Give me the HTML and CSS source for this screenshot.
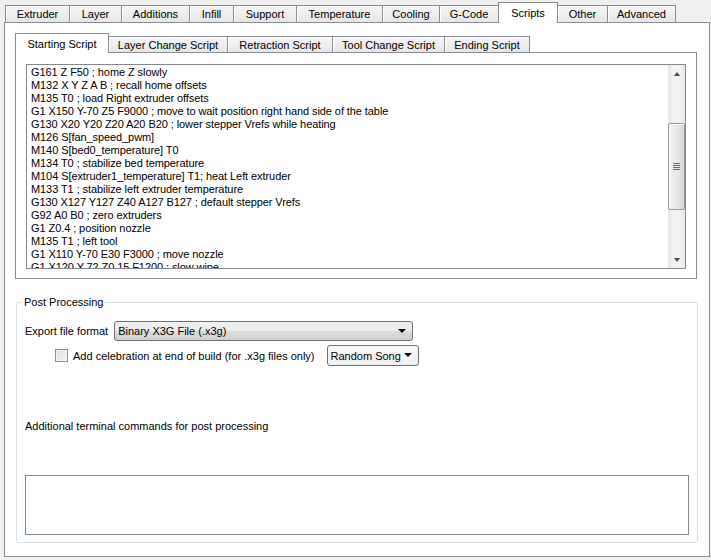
FILE: index.html
```html
<!DOCTYPE html>
<html lang="en">
<head>
    <meta charset="UTF-8">
    <title>Scripts</title>
    <link rel="stylesheet" href="styles.css">
</head>
<body>
    <div class="notebook">
        <div class="tabbar">
            <div class="tab">Extruder</div>
            <div class="tab">Layer</div>
            <div class="tab">Additions</div>
            <div class="tab">Infill</div>
            <div class="tab">Support</div>
            <div class="tab">Temperature</div>
            <div class="tab">Cooling</div>
            <div class="tab">G-Code</div>
            <div class="tab active">Scripts</div>
            <div class="tab">Other</div>
            <div class="tab">Advanced</div>
        </div>
        <div class="pane">
            <div class="notebook inner">
                <div class="tabbar">
                    <div class="tab active">Starting Script</div>
                    <div class="tab">Layer Change Script</div>
                    <div class="tab">Retraction Script</div>
                    <div class="tab">Tool Change Script</div>
                    <div class="tab">Ending Script</div>
                </div>
                <div class="pane">
                    <div class="editor">
                        <div class="code">G161 Z F50 ; home Z slowly
M132 X Y Z A B ; recall home offsets
M135 T0 ; load Right extruder offsets
G1 X150 Y-70 Z5 F9000 ; move to wait position right hand side of the table
G130 X20 Y20 Z20 A20 B20 ; lower stepper Vrefs while heating
M126 S[fan_speed_pwm]
M140 S[bed0_temperature] T0
M134 T0 ; stabilize bed temperature
M104 S[extruder1_temperature] T1; heat Left extruder
M133 T1 ; stabilize left extruder temperature
G130 X127 Y127 Z40 A127 B127 ; default stepper Vrefs
G92 A0 B0 ; zero extruders
G1 Z0.4 ; position nozzle
M135 T1 ; left tool
G1 X110 Y-70 E30 F3000 ; move nozzle
G1 X120 Y-72 Z0.15 F1200 ; slow wipe</div>
                        <div class="scrollbar">
                            <div class="arrow up"></div>
                            <div class="track">
                                <div class="thumb"><span class="grip"></span></div>
                            </div>
                            <div class="arrow down"></div>
                        </div>
                    </div>
                </div>
            </div>

            <fieldset class="group">
                <legend>Post Processing</legend>
                <div class="row">
                    <span class="label">Export file format</span>
                    <div class="combo wide">Binary X3G File (.x3g)<span class="caret"></span></div>
                </div>
                <div class="row indent">
                    <span class="checkbox"></span>
                    <span class="label">Add celebration at end of build (for .x3g files only)</span>
                    <div class="combo song">Random Song<span class="caret"></span></div>
                </div>
                <div class="extra-label">Additional terminal commands for post processing</div>
                <div class="textarea"></div>
            </fieldset>
        </div>
    </div>
</body>
</html>
```

FILE: styles.css
```css
body {
    margin: 0;
    background: #f0f0f0;
    font-family: "Liberation Sans", Arial, sans-serif;
    font-size: 11px;
    color: #000;
}
.notebook {
    margin-left: 4px;
    width: 706px;
}
.tabbar {
    display: flex;
    align-items: flex-end;
    height: 22px;
    padding-left: 1px;
}
.tab {
    box-sizing: border-box;
    height: 17px;
    margin-left: -1px;
    border: 1px solid #898c95;
    border-bottom: none;
    background: linear-gradient(#f6f6f6, #e6e6e6);
    box-shadow: inset 1px 1px 0 #fff;
    text-align: center;
    line-height: 16px;
}
.tab:first-child {
    margin-left: 0;
}
.tab.active {
    position: relative;
    z-index: 1;
    height: 21px;
    margin-bottom: -1px;
    background: #fff;
    box-shadow: none;
    line-height: 20px;
    padding-bottom: 3px;
}
/* widths of the top tabs */
.tabbar .tab:nth-child(1) { width: 65px; }
.tabbar .tab:nth-child(2) { width: 53px; }
.tabbar .tab:nth-child(3) { width: 69px; }
.tabbar .tab:nth-child(4) { width: 45px; }
.tabbar .tab:nth-child(5) { width: 64px; }
.tabbar .tab:nth-child(6) { width: 87px; }
.tabbar .tab:nth-child(7) { width: 58px; }
.tabbar .tab:nth-child(8) { width: 60px; }
.tabbar .tab:nth-child(9) { width: 60px; }
.tabbar .tab:nth-child(10) { width: 51px; }
.tabbar .tab:nth-child(11) { width: 69px; }

.pane {
    box-sizing: border-box;
    height: 535px;
    border: 1px solid #898c95;
    background: #fff;
    padding: 10px 0 0 0;
}

/* inner notebook */
.notebook.inner {
    margin-left: 10px;
    width: 682px;
}
.inner .tabbar {
    height: 19px;
    padding-left: 0;
}
.inner .tab {
    height: 16px;
    line-height: 16px;
}
.inner .tab.active {
    height: 20px;
    line-height: 20px;
}
.inner .tabbar .tab:nth-child(1) { width: 94px; }
.inner .tabbar .tab:nth-child(2) { width: 120px; }
.inner .tabbar .tab:nth-child(3) { width: 106px; }
.inner .tabbar .tab:nth-child(4) { width: 113px; }
.inner .tabbar .tab:nth-child(5) { width: 86px; }
.inner .pane {
    height: 227px;
    padding: 11px 10px 9px 10px;
}

.editor {
    display: flex;
    height: 205px;
    border: 1px solid #828790;
    box-sizing: border-box;
}
.code {
    flex: 1;
    overflow: hidden;
    white-space: pre;
    padding: 1px 0 0 4px;
    line-height: 13px;
    letter-spacing: -0.08px;
}
.scrollbar {
    width: 17px;
    display: flex;
    flex-direction: column;
    background: linear-gradient(90deg, #e6e6e6, #f2f2f2 30%, #f2f2f2 70%, #e8e8e8);
}
.arrow {
    height: 17px;
    display: flex;
    align-items: center;
    justify-content: center;
}
.arrow::before {
    content: "";
    border-left: 3px solid transparent;
    border-right: 3px solid transparent;
}
.arrow.up::before {
    border-bottom: 4px solid #4d4d4d;
}
.arrow.down::before {
    border-top: 4px solid #4d4d4d;
}
.track {
    flex: 1;
    padding-top: 41px;
}
.thumb {
    box-sizing: border-box;
    height: 87px;
    border: 1px solid #979797;
    border-radius: 2px;
    background: linear-gradient(90deg, #f4f4f4, #e8e8e8 50%, #d8d8d8);
    box-shadow: inset 1px 1px 0 #fff;
    display: flex;
    align-items: center;
    justify-content: center;
}
.grip {
    width: 7px;
    height: 7px;
    background: repeating-linear-gradient(#6d6d6d 0, #6d6d6d 1px, transparent 1px, transparent 2px);
}

/* post processing group */
.group {
    margin: 17px 11px 0 11px;
    padding: 8px 8px 8px 8px;
    border: 1px solid #d5dfe5;
    border-radius: 3px;
    height: 247px;
    box-sizing: border-box;
}
.group legend {
    padding: 0 2px;
    margin-left: -3px;
}
.row {
    display: flex;
    align-items: center;
    height: 20px;
    margin-top: 5px;
}
.row .label {
    margin-right: 6px;
}
.row.indent {
    height: 21px;
    margin-top: 4px;
    padding-left: 30px;
}
.checkbox {
    box-sizing: border-box;
    width: 13px;
    height: 13px;
    margin-right: 5px;
    border: 1px solid #8f8f8f;
    background: linear-gradient(135deg, #dcdcdc, #f6f6f6);
    box-shadow: inset 0 0 0 1px #f4f4f4;
}
.combo {
    position: relative;
    box-sizing: border-box;
    height: 20px;
    line-height: 18px;
    padding-left: 3px;
    border: 1px solid #707070;
    border-radius: 3px;
    background: linear-gradient(#f2f2f2, #ebebeb 50%, #dddddd 51%, #cfcfcf);
}
.combo.wide {
    width: 299px;
}
.combo.song {
    width: 92px;
    margin-left: 6px;
    height: 21px;
    line-height: 20px;
    background: linear-gradient(#fafafa, #f0f0f0);
}
.caret {
    position: absolute;
    right: 6px;
    top: 7px;
    border-left: 4px solid transparent;
    border-right: 4px solid transparent;
    border-top: 4px solid #000;
}
.extra-label {
    margin-top: 54px;
}
.textarea {
    margin-top: 43px;
    height: 58px;
    border: 1px solid #828790;
    background: #fff;
}
```
